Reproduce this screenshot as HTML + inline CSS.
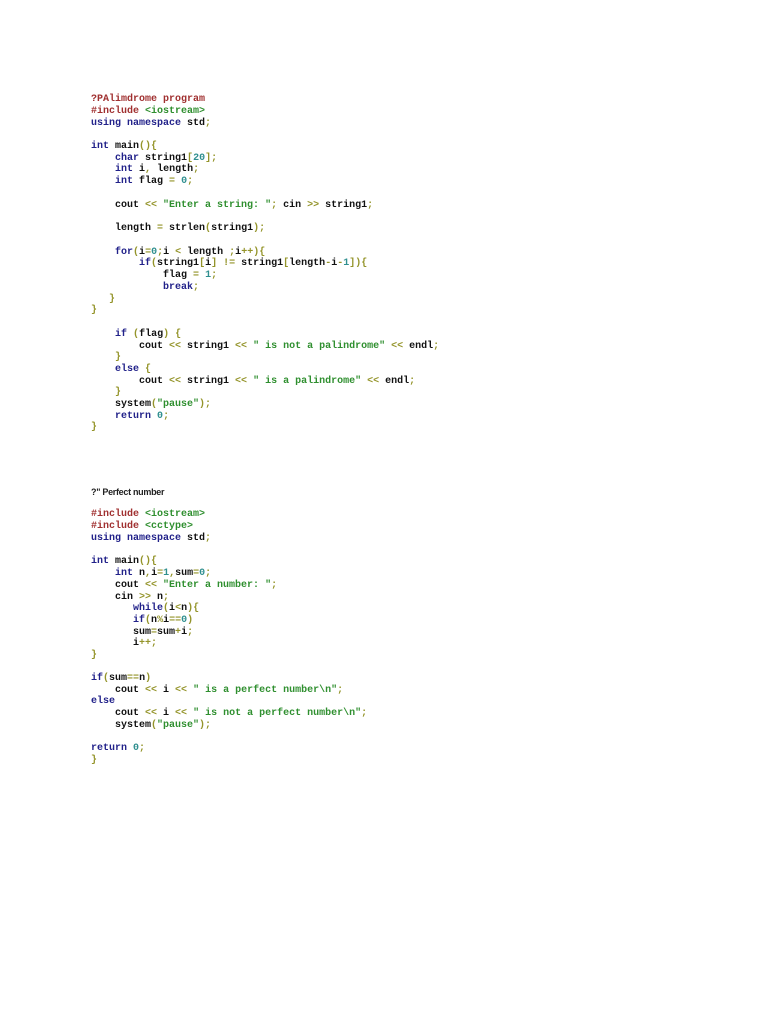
<!DOCTYPE html>
<html><head><meta charset="utf-8"><style>
body{margin:0;background:#fff;width:768px;height:1024px;position:relative;overflow:hidden}
#w{position:absolute;left:0;top:2px;width:768px;height:1000px}
.l{position:absolute;left:91px;font-family:"Liberation Mono",monospace;font-size:10px;line-height:12px;white-space:pre;color:#111;font-weight:bold;letter-spacing:0}
.k{color:#22228a}.s{color:#2f8f2f}.p{color:#a03030}.o{color:#94942a}.n{color:#2f8f8f}
.t{position:absolute;left:91px;font-family:"Liberation Sans",sans-serif;font-size:9px;font-weight:bold;color:#222;letter-spacing:-0.3px}
</style></head><body><div id="w">
<div class="l" style="top:92px"><span class="p">?PAlimdrome program</span></div>
<div class="l" style="top:104px"><span class="p">#include</span> <span class="s">&lt;iostream&gt;</span></div>
<div class="l" style="top:116px"><span class="k">using namespace</span> std<span class="o">;</span></div>
<div class="l" style="top:139px"><span class="k">int</span> main<span class="o">(){</span></div>
<div class="l" style="top:151px">    <span class="k">char</span> string1<span class="o">[</span><span class="n">20</span><span class="o">];</span></div>
<div class="l" style="top:162px">    <span class="k">int</span> i<span class="o">,</span> length<span class="o">;</span></div>
<div class="l" style="top:174px">    <span class="k">int</span> flag <span class="o">=</span> <span class="n">0</span><span class="o">;</span></div>
<div class="l" style="top:198px">    cout <span class="o">&lt;&lt;</span> <span class="s">"Enter a string: "</span><span class="o">;</span> cin <span class="o">&gt;&gt;</span> string1<span class="o">;</span></div>
<div class="l" style="top:221px">    length <span class="o">=</span> strlen<span class="o">(</span>string1<span class="o">);</span></div>
<div class="l" style="top:245px">    <span class="k">for</span><span class="o">(</span>i<span class="o">=</span><span class="n">0</span><span class="o">;</span>i <span class="o">&lt;</span> length <span class="o">;</span>i<span class="o">++){</span></div>
<div class="l" style="top:256px">        <span class="k">if</span><span class="o">(</span>string1<span class="o">[</span>i<span class="o">]</span> <span class="o">!=</span> string1<span class="o">[</span>length<span class="o">-</span>i<span class="o">-</span><span class="n">1</span><span class="o">]){</span></div>
<div class="l" style="top:268px">            flag <span class="o">=</span> <span class="n">1</span><span class="o">;</span></div>
<div class="l" style="top:280px">            <span class="k">break</span><span class="o">;</span></div>
<div class="l" style="top:292px">   <span class="o">}</span></div>
<div class="l" style="top:303px"><span class="o">}</span></div>
<div class="l" style="top:327px">    <span class="k">if</span> <span class="o">(</span>flag<span class="o">)</span> <span class="o">{</span></div>
<div class="l" style="top:339px">        cout <span class="o">&lt;&lt;</span> string1 <span class="o">&lt;&lt;</span> <span class="s">" is not a palindrome"</span> <span class="o">&lt;&lt;</span> endl<span class="o">;</span></div>
<div class="l" style="top:350px">    <span class="o">}</span></div>
<div class="l" style="top:362px">    <span class="k">else</span> <span class="o">{</span></div>
<div class="l" style="top:374px">        cout <span class="o">&lt;&lt;</span> string1 <span class="o">&lt;&lt;</span> <span class="s">" is a palindrome"</span> <span class="o">&lt;&lt;</span> endl<span class="o">;</span></div>
<div class="l" style="top:385px">    <span class="o">}</span></div>
<div class="l" style="top:397px">    system<span class="o">(</span><span class="s">"pause"</span><span class="o">);</span></div>
<div class="l" style="top:409px">    <span class="k">return</span> <span class="n">0</span><span class="o">;</span></div>
<div class="l" style="top:420px"><span class="o">}</span></div>

<div class="t" style="top:485px">?" Perfect number</div>
<div class="l" style="top:507px"><span class="p">#include</span> <span class="s">&lt;iostream&gt;</span></div>
<div class="l" style="top:519px"><span class="p">#include</span> <span class="s">&lt;cctype&gt;</span></div>
<div class="l" style="top:531px"><span class="k">using namespace</span> std<span class="o">;</span></div>
<div class="l" style="top:554px"><span class="k">int</span> main<span class="o">(){</span></div>
<div class="l" style="top:566px">    <span class="k">int</span> n<span class="o">,</span>i<span class="o">=</span><span class="n">1</span><span class="o">,</span>sum<span class="o">=</span><span class="n">0</span><span class="o">;</span></div>
<div class="l" style="top:578px">    cout <span class="o">&lt;&lt;</span> <span class="s">"Enter a number: "</span><span class="o">;</span></div>
<div class="l" style="top:590px">    cin <span class="o">&gt;&gt;</span> n<span class="o">;</span></div>
<div class="l" style="top:601px">       <span class="k">while</span><span class="o">(</span>i<span class="o">&lt;</span>n<span class="o">){</span></div>
<div class="l" style="top:613px">       <span class="k">if</span><span class="o">(</span>n<span class="o">%</span>i<span class="o">==</span><span class="n">0</span><span class="o">)</span></div>
<div class="l" style="top:625px">       sum<span class="o">=</span>sum<span class="o">+</span>i<span class="o">;</span></div>
<div class="l" style="top:636px">       i<span class="o">++;</span></div>
<div class="l" style="top:648px"><span class="o">}</span></div>
<div class="l" style="top:671px"><span class="k">if</span><span class="o">(</span>sum<span class="o">==</span>n<span class="o">)</span></div>
<div class="l" style="top:683px">    cout <span class="o">&lt;&lt;</span> i <span class="o">&lt;&lt;</span> <span class="s">" is a perfect number\n"</span><span class="o">;</span></div>
<div class="l" style="top:694px"><span class="k">else</span></div>
<div class="l" style="top:706px">    cout <span class="o">&lt;&lt;</span> i <span class="o">&lt;&lt;</span> <span class="s">" is not a perfect number\n"</span><span class="o">;</span></div>
<div class="l" style="top:718px">    system<span class="o">(</span><span class="s">"pause"</span><span class="o">);</span></div>
<div class="l" style="top:741px"><span class="k">return</span> <span class="n">0</span><span class="o">;</span></div>
<div class="l" style="top:753px"><span class="o">}</span></div>
</div></body></html>
